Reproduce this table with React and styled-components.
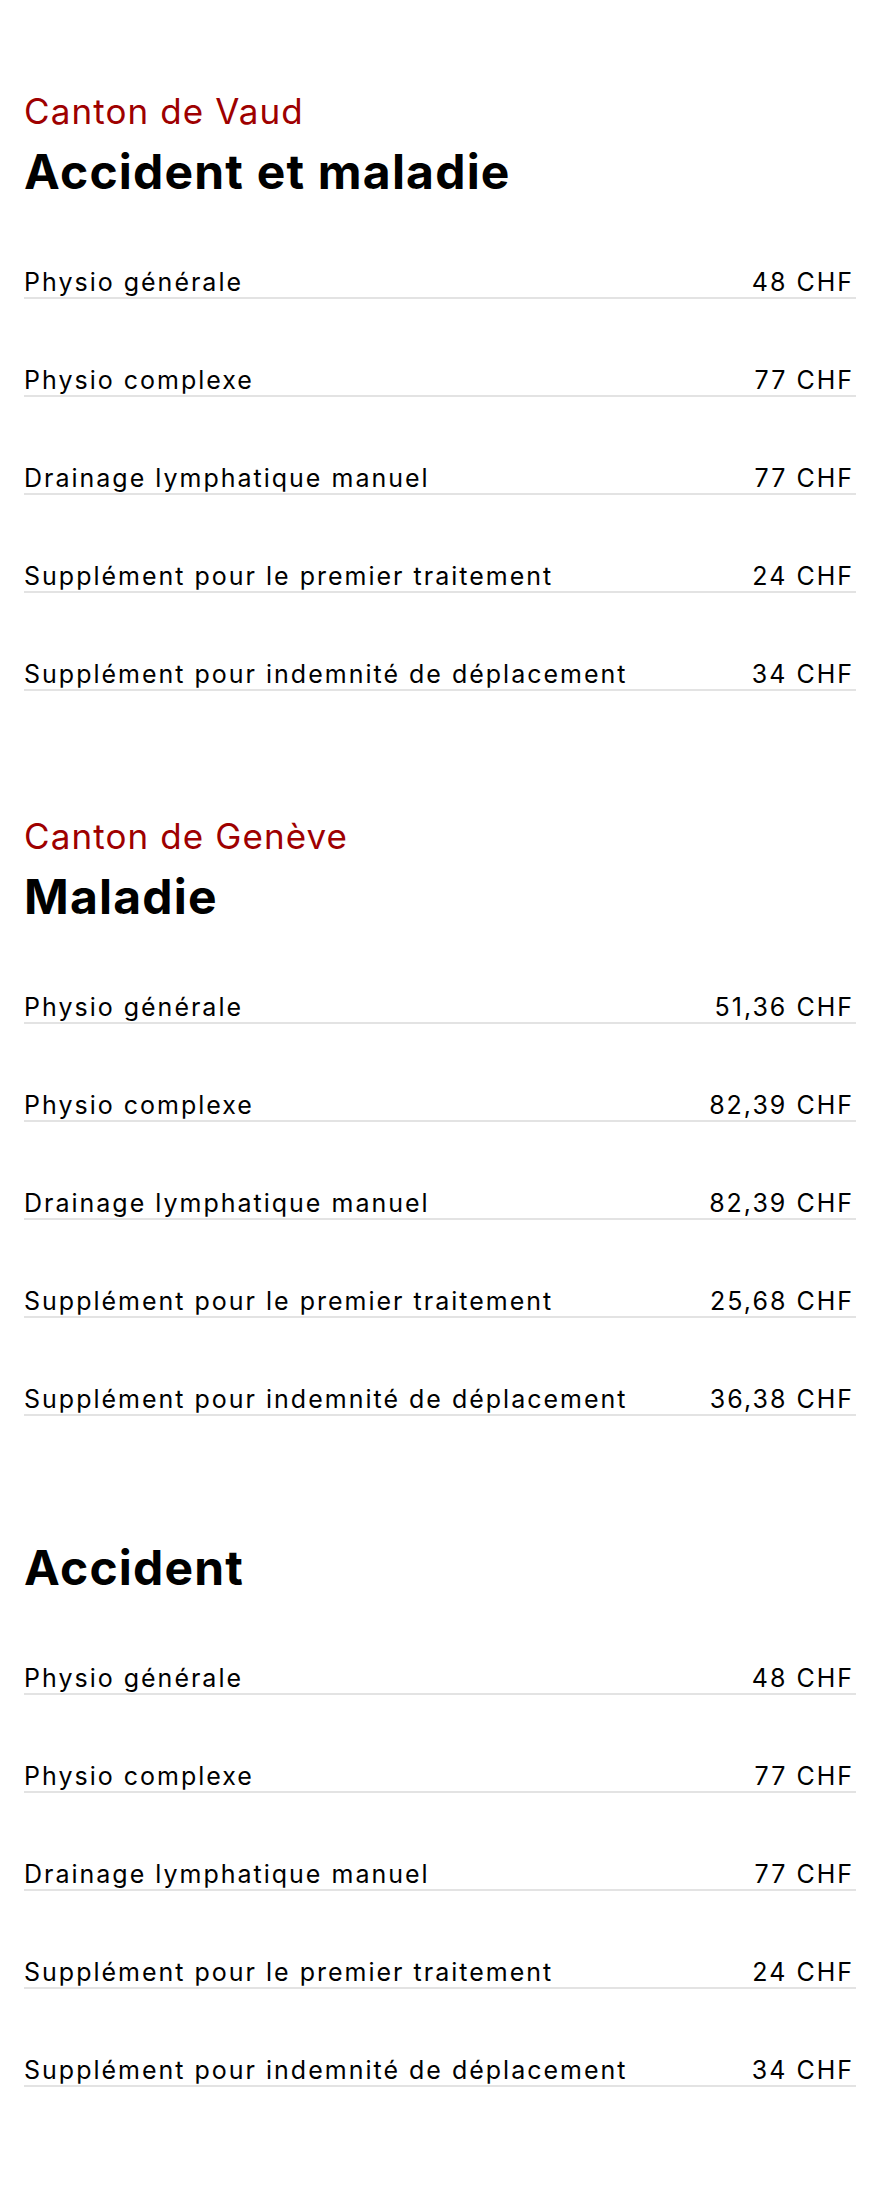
import React from "react";
import styled, { createGlobalStyle } from "styled-components";

const GlobalStyle = createGlobalStyle`
  html, body { margin: 0; padding: 0; background: #ffffff; }
  body { font-family: Inter, "Noto Sans", "DejaVu Sans", sans-serif; color: #000; }
  * { box-sizing: border-box; }
`;

const Page = styled.main`
  display: flex;
  flex-direction: column;
  gap: 123px;
  padding: 89px 24px 119px;
`;

const Section = styled.section`
  display: flex;
  flex-direction: column;
`;

const Subtitle = styled.p`
  margin: 0 0 10px;
  font-size: 35px;
  line-height: 44px;
  font-weight: 400;
  color: #9e0000;
  letter-spacing: 1.1px;
`;

const Heading = styled.h2`
  margin: 0;
  font-size: 48px;
  line-height: 58px;
  font-weight: 700;
  letter-spacing: 1.2px;
`;

const List = styled.ul`
  list-style: none;
  margin: 66px 0 0;
  padding: 0;
  display: flex;
  flex-direction: column;
  gap: 66px;
`;

const Row = styled.li`
  display: flex;
  justify-content: space-between;
  align-items: baseline;
  font-size: 25px;
  line-height: 30px;
  letter-spacing: 2px;
  padding-right: 2px;
  border-bottom: 2px solid #e3e3e3;
`;

const Label = styled.span``;
const Price = styled.span`
  white-space: nowrap;
`;

const items = [
  "Physio générale",
  "Physio complexe",
  "Drainage lymphatique manuel",
  "Supplément pour le premier traitement",
  "Supplément pour indemnité de déplacement",
];

const sections = [
  { subtitle: "Canton de Vaud", title: "Accident et maladie", prices: ["48", "77", "77", "24", "34"] },
  { subtitle: "Canton de Genève", title: "Maladie", prices: ["51,36", "82,39", "82,39", "25,68", "36,38"] },
  { title: "Accident", prices: ["48", "77", "77", "24", "34"] },
];

export default function App() {
  return (
    <>
      <GlobalStyle />
      <Page>
        {sections.map((s) => (
          <Section key={s.title}>
            {s.subtitle && <Subtitle>{s.subtitle}</Subtitle>}
            <Heading>{s.title}</Heading>
            <List>
              {items.map((label, i) => (
                <Row key={label}>
                  <Label>{label}</Label>
                  <Price>{s.prices[i]} CHF</Price>
                </Row>
              ))}
            </List>
          </Section>
        ))}
      </Page>
    </>
  );
}
